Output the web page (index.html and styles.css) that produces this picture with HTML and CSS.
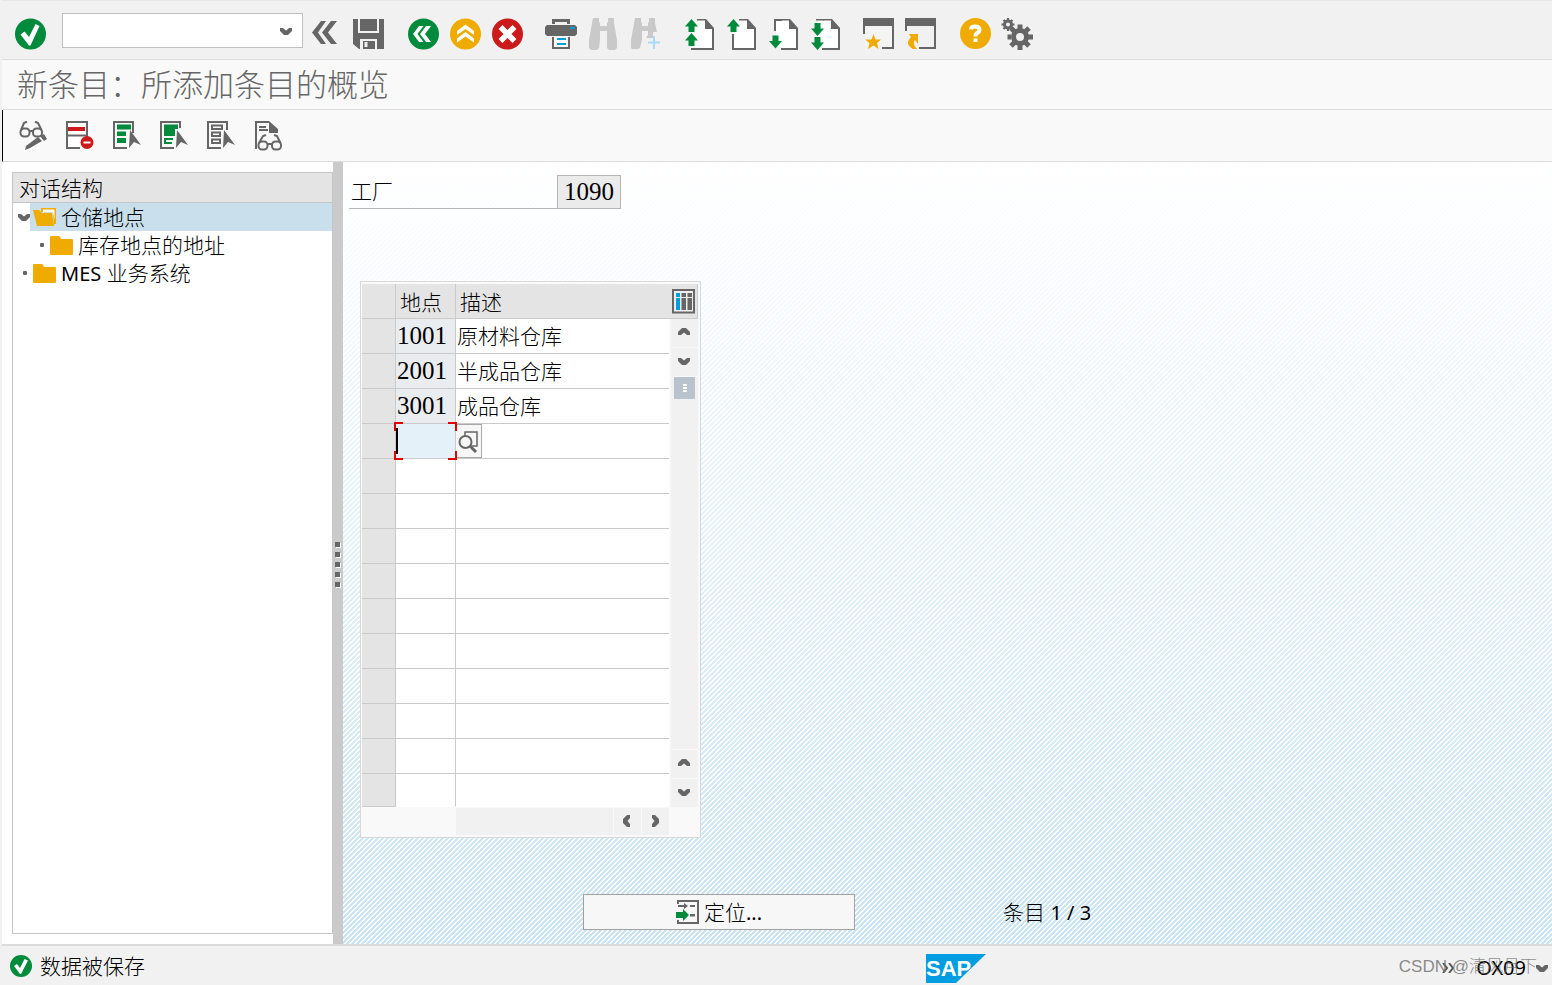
FILE: index.html
```html
<!DOCTYPE html>
<html lang="zh-CN">
<head>
<meta charset="utf-8">
<title>新条目：所添加条目的概览</title>
<link rel="stylesheet" href="styles.css">
</head>
<body>
<svg class="defs" aria-hidden="true">
  <defs>
    <symbol id="up" viewBox="0 0 12 8"><path d="M0 7 H3 L6 4.500 L9 7 H12 V4 L8 0 H4 L0 4Z" fill="#666"/></symbol>
    <symbol id="down" viewBox="0 0 12 8"><path d="M0 1 H3 L6 3.500 L9 1 H12 V4 L8 8 H4 L0 4Z" fill="#666"/></symbol>
    <symbol id="left" viewBox="0 0 8 12"><path d="M7 0 V3 L4.500 6 L7 9 V12 H4 L0 8 V4 L4 0Z" fill="#666"/></symbol>
    <symbol id="right" viewBox="0 0 8 12"><path d="M1 0 V3 L3.500 6 L1 9 V12 H4 L8 8 V4 L4 0Z" fill="#666"/></symbol>
    <symbol id="folder" viewBox="0 0 24 21"><path d="M0 2 Q0 1 1 1 H9 Q10 1 11 4 H22 Q23 4 23 5 V19 Q23 20 22 20 H1 Q0 20 0 19Z" fill="#f0ab00"/></symbol>
    <symbol id="page" viewBox="0 0 32 32"><path d="M7 2 H20 L28 10 V30 H7Z" fill="#fff"/><path d="M12 1 H21 L29 10 V32 H6 V30 H27 V11 H20 V2.500 H12Z" fill="#666"/></symbol>
    <symbol id="arrow" viewBox="0 0 13 13"><path d="M6.500 0 L13 7.500 H9.500 V13 H3.500 V7.500 H0Z" fill="#008a3b"/></symbol>
  </defs>
</svg>

<header class="system-bar">
  <button class="tool" aria-label="回车"><svg viewBox="0 0 32 32"><circle cx="15.500" cy="16" r="15.500" fill="#008a3b"/><path d="M5.500 16.500 L9.500 13.500 L14 19 L20.500 6 L24.500 8 L15.500 27.500 H14Z" fill="#fff"/></svg></button>
  <div class="command">
    <input class="command-input" type="text" aria-label="命令">
    <svg class="command-arrow" viewBox="0 0 12 8"><use href="#down"/></svg>
  </div>
  <button class="tool collapse" aria-label="收起"><svg viewBox="0 0 32 32"><path d="M1 14.500 L10 3 H15 L7 14.500 L15 26 H10Z M11 14.500 L20 3 H26 L17 14.500 L26 26 H20Z" fill="#666"/></svg></button>
  <div class="tool-group">
    <button class="tool" aria-label="保存"><svg viewBox="0 0 32 32"><path d="M0 1 H5 V15 H26 V1 H31 V31 H6 L0 26Z" fill="#666"/><rect x="7" y="1" width="17" height="12" fill="#666"/><path d="M7 21 H24 V31 H7Z" fill="#f1f1f1"/><path d="M10 23 H22 V31 H10Z" fill="#666"/><path d="M11.500 24 H14.500 V29 H11.500Z" fill="#f1f1f1"/></svg></button>
  </div>
  <div class="tool-group">
    <button class="tool" aria-label="返回"><svg viewBox="0 0 32 32"><circle cx="16.500" cy="16" r="15.500" fill="#008a3b"/><path d="M6 16 L12 8 H16.500 L10.500 16 L16.500 24 H12Z M13 16 L19 8 H24 L18 16 L24 24 H19Z" fill="#fff"/></svg></button>
    <button class="tool" aria-label="退出"><svg viewBox="0 0 32 32"><circle cx="16.500" cy="16" r="15.500" fill="#f0ab00"/><path d="M16.500 6.500 L25 13 V17 L16.500 11 L8 17 V13Z M16.500 14 L25 20.500 V24.500 L16.500 18.500 L8 24.500 V20.500Z" fill="#fff"/></svg></button>
    <button class="tool" aria-label="取消"><svg viewBox="0 0 32 32"><circle cx="16.500" cy="16" r="15.500" fill="#cc1919"/><path d="M9.500 9 L23.500 23 M23.500 9 L9.500 23" stroke="#fff" stroke-width="5.500"/></svg></button>
  </div>
  <div class="tool-group">
    <button class="tool" aria-label="打印"><svg viewBox="0 0 32 32"><path d="M7 1 H25 V6 H22 V4 H10 V6 H7Z" fill="#666"/><path d="M2 7 H30 L32 9 V16 L30 18 H2 L0 16 V9Z" fill="#666"/><path d="M25 9 H30 V11 H25Z" fill="#009de0"/><path d="M8 19 V30 H24 V19" fill="#fff" stroke="#666" stroke-width="2"/><path d="M12 20 H21 V22 H12Z M12 25 H21 V27 H12Z" fill="#009de0"/></svg></button>
    <button class="tool" aria-label="查找" disabled><svg viewBox="0 0 32 32"><path d="M6 0 H12 V4 L13 5 V8 H20 V5 L21 4 V0 H27 V5 L30 22 V30 L28 32 H22 L20 30 V13 H13 V22 L12 30 L10 32 H4 L2 30 V22Z" fill="#c9c9c9"/></svg></button>
    <button class="tool" aria-label="查找下一个" disabled><svg viewBox="0 0 32 32"><path d="M6 0 H12 V4 L13 5 V8 H19 V5 L20 4 V0 H26 V5 L28 14 H24 V20 H17 L19 17 V13 H13 V22 L11 30 L9 31 H3 L2 30 V22Z" fill="#c9c9c9"/><path d="M25 18 V31 M19 24.500 H31" stroke="#a9dcf4" stroke-width="2"/></svg></button>
  </div>
  <div class="tool-group">
    <button class="tool" aria-label="第一页"><svg viewBox="0 0 32 32"><use href="#page" x="2" width="32" height="32"/><path d="M2 1 H13 V29 H2Z" fill="#f1f1f1"/><path d="M9 3 H14 V29 H9Z" fill="#fff"/><use href="#arrow" x="2" y="1" width="13" height="13"/><use href="#arrow" x="2" y="15" width="13" height="13"/></svg></button>
    <button class="tool" aria-label="上一页"><svg viewBox="0 0 32 32"><use href="#page" x="2" width="32" height="32"/><path d="M7 16 H9 V32 H7Z" fill="#666"/><path d="M8 0 H14 V3 H8Z" fill="#f1f1f1"/><use href="#arrow" x="2" y="1" width="13" height="13"/></svg></button>
    <button class="tool" aria-label="下一页"><svg viewBox="0 0 32 32"><use href="#page" x="2" width="32" height="32"/><path d="M7 1 H15 V3 H9 V13 H7Z" fill="#666"/><path d="M7 29 H14 V32 H7Z" fill="#f1f1f1"/><use href="#arrow" x="2" y="-32" width="13" height="16" transform="scale(1 -1)"/></svg></button>
    <button class="tool" aria-label="最后一页"><svg viewBox="0 0 32 32"><use href="#page" x="2" width="32" height="32"/><path d="M7 1 H15 V2.500 H7Z" fill="#666"/><path d="M7 29 H13 V32 H7Z" fill="#f1f1f1"/><use href="#arrow" x="2" y="-18" width="13" height="13" transform="scale(1 -1)"/><use href="#arrow" x="2" y="-32" width="13" height="13" transform="scale(1 -1)"/></svg></button>
  </div>
  <div class="tool-group">
    <button class="tool" aria-label="新建会话"><svg viewBox="0 0 32 32"><path d="M2 8 H29 V29 H2Z" fill="#f4f4f4"/><path d="M0 0 H31 V31 H19 V29 H29 V8 H2 V16 H0Z" fill="#666"/><path d="M10.500 16 L12.500 21.500 H18 L14 25 L15.500 31 L10.500 27.500 L5 31 L6.500 25 L2 21.500 H8.500Z" fill="#f0ab00"/></svg></button>
    <button class="tool" aria-label="生成快捷方式"><svg viewBox="0 0 32 32"><path d="M0 0 H31 V31 H14 V29 H29 V8 H2 V13 H0Z" fill="#666"/><path d="M4 16 H13 V26 L10 22 Q7 26 12 31 H8 Q-1 26 6 19Z" fill="#f0ab00"/></svg></button>
  </div>
  <div class="tool-group">
    <button class="tool" aria-label="帮助"><svg viewBox="0 0 32 32"><circle cx="16.500" cy="15.500" r="15.500" fill="#f0ab00"/><path d="M12 11.500 Q12 8.500 16 8.500 Q20.500 8.500 20.500 12 Q20.500 14 17.500 15.500 Q16.500 16.500 16.500 18.500" fill="none" stroke="#fff" stroke-width="4"/><path d="M14.500 20.500 H18.500 V24 H14.500Z" fill="#fff"/></svg></button>
    <button class="tool" aria-label="定制本地布局"><svg viewBox="0 0 32 32"><g fill="none" stroke="#666"><circle cx="19" cy="19" r="6.500" stroke-width="5"/><path d="M19 6.500 V11 M19 27 V32 M6.500 19 H10 M27 19 H32 M10 10 L14 14 M24 24 L28 28 M28 10 L24 14 M14 24 L10 28" stroke-width="5"/><circle cx="7" cy="6.500" r="3.500" stroke-width="3"/><path d="M7 0 V3 M7 10 V13 M.5 6.500 H3 M11 6.500 H13.500 M2.500 2 L4.500 4 M9.500 9 L11.500 11 M11.500 2 L9.500 4 M4.500 9 L2.500 11" stroke-width="2.200"/></g></svg></button>
  </div>
</header>

<h1 class="title">新条目：所添加条目的概览</h1>

<nav class="app-bar">
  <button class="app-tool" aria-label="显示/更改"><svg viewBox="0 0 28 30"><g fill="none" stroke="#666" stroke-width="2"><rect x="1.500" y="7.500" width="9" height="8" rx="3.500"/><rect x="14" y="7.500" width="9" height="8" rx="3.500"/><path d="M10 10 H14 M2 9 L5 2 L8 .5 M22.500 9 L19 2 L16 .5"/></g><path d="M7 25 L19 16 L23 20 L11 27 L6 29Z M21 15 L25 13 L28 18 L25 20Z" fill="#666"/></svg></button>
  <button class="app-tool" aria-label="删除"><svg viewBox="0 0 28 30"><path d="M1 1 H20 V17 H14 V27 H1Z" fill="#fff"/><path d="M21 17 V1 H1 V27 H14 M1 14.500 H20" fill="none" stroke="#666" stroke-width="2"/><path d="M2 6 H19 V10 H2Z" fill="#cc1919"/><circle cx="21" cy="21.500" r="6.500" fill="#cc1919"/><path d="M17.500 20.500 H24.500 V22.500 H17.500Z" fill="#fff"/></svg></button>
  <button class="app-tool" aria-label="全选"><svg viewBox="0 0 28 30"><path d="M20 12 V1 H1 V27 H14" fill="none" stroke="#666" stroke-width="2"/><path d="M4 3.500 H18 V8.500 H4Z M4 10.500 H13 V15 H4Z M4 17 H13 V22 H4Z" fill="#008a3b"/><path d="M17 9 L28 24 L21 21 L16 27Z" fill="#666"/></svg></button>
  <button class="app-tool" aria-label="选择块"><svg viewBox="0 0 28 30"><path d="M20 7 V1 H1 V27 H14" fill="none" stroke="#666" stroke-width="2"/><path d="M4 3.500 H18 V8 H15 V15 H4Z" fill="#008a3b"/><path d="M13 18 H5 V22 H12" fill="none" stroke="#008a3b" stroke-width="2"/><path d="M17 9 L28 24 L21 21 L16 27Z" fill="#666"/></svg></button>
  <button class="app-tool" aria-label="取消全选"><svg viewBox="0 0 28 30"><path d="M20 9 V1 H1 V27 H14 M5 4.500 H15 V8 H5Z M5 11.500 H13 V15 H5Z M5 18.500 H13 V22 H5Z" fill="none" stroke="#666" stroke-width="2"/><path d="M17 9 L28 24 L21 21 L16 27Z" fill="#666"/></svg></button>
  <button class="app-tool" aria-label="打印视图"><svg viewBox="0 0 28 30"><path d="M2 28 V1 H15 M5 6 H12 M5 9 H14" fill="none" stroke="#666" stroke-width="2"/><path d="M15 0 L24 8 V12 H15Z" fill="#666"/><g fill="none" stroke="#666" stroke-width="2"><rect x="4.500" y="20.500" width="9" height="8" rx="3.500"/><rect x="18" y="20.500" width="9" height="8" rx="3.500"/><path d="M13 23 H18 M5 22 L9 15 L12 14 M26.500 22 L23 15 L20 14"/></g></svg></button>
</nav>

<main class="work">
  <aside class="side">
    <div class="tree">
      <h2 class="tree-head">对话结构</h2>
      <ul class="tree-list">
        <li class="node"><svg class="toggle" viewBox="0 0 12 8"><use href="#down"/></svg><a class="node-link selected" href="#storage"><svg class="folder" viewBox="0 0 24 21"><path d="M8 1 H23 V17 H21 L20 5 H8Z" fill="#f0ab00"/><path d="M10 2.500 H21.500 V13 L20 5 H10Z" fill="#fff"/><path d="M0 3 H6 L9 6 H19 L21 19 H4Z" fill="#f0ab00"/></svg>仓储地点</a></li>
        <li class="node child"><i class="dot"></i><a class="node-link" href="#address"><svg class="folder"><use href="#folder"/></svg>库存地点的地址</a></li>
        <li class="node"><i class="dot"></i><a class="node-link" href="#mes"><svg class="folder"><use href="#folder"/></svg><span><span class="latin">MES</span> 业务系统</span></a></li>
      </ul>
    </div>
  </aside>
  <div class="splitter"><i></i><i></i><i></i><i></i><i></i></div>
  <section class="content">
    <div class="field">
      <label class="field-label" for="plant">工厂</label>
      <input class="field-input" id="plant" type="text" value="1090" readonly>
    </div>
    <div class="grid-frame">
      <table class="grid">
        <thead><tr><th class="sel"></th><th class="code">地点</th><th class="desc">描述</th></tr></thead>
        <tbody>
          <tr class="filled"><td></td><td><input aria-label="地点 1" value="1001" readonly></td><td><input aria-label="描述 1" value="原材料仓库"></td></tr>
          <tr class="filled"><td></td><td><input aria-label="地点 2" value="2001" readonly></td><td><input aria-label="描述 2" value="半成品仓库"></td></tr>
          <tr class="filled"><td></td><td><input aria-label="地点 3" value="3001" readonly></td><td><input aria-label="描述 3" value="成品仓库"></td></tr>
          <tr class="active"><td></td><td><input aria-label="地点 4"><span class="focus"></span></td><td><button class="lookup" aria-label="搜索帮助"><svg viewBox="0 0 22 22"><path d="M7 5 V1 H19 V15 H14" fill="none" stroke="#666" stroke-width="1.500"/><circle cx="7.500" cy="11" r="6" fill="#f7f7f7" stroke="#666" stroke-width="2"/><path d="M12 15 L18 21" stroke="#666" stroke-width="3"/></svg></button></td></tr>
          <tr><td></td><td></td><td></td></tr>
          <tr><td></td><td></td><td></td></tr>
          <tr><td></td><td></td><td></td></tr>
          <tr><td></td><td></td><td></td></tr>
          <tr><td></td><td></td><td></td></tr>
          <tr><td></td><td></td><td></td></tr>
          <tr><td></td><td></td><td></td></tr>
          <tr><td></td><td></td><td></td></tr>
          <tr><td></td><td></td><td></td></tr>
          <tr class="last"><td></td><td></td><td></td></tr>
        </tbody>
      </table>
      <div class="grid-side">
        <button class="config" aria-label="配置"><svg viewBox="0 0 24 25"><path d="M1 1 H22 V23.500 H1Z" fill="#eee" stroke="#666" stroke-width="2"/><path d="M4 4 H8 V8 H4Z M4 9 H8 V21 H4Z" fill="#009de0"/><path d="M9.500 4 H14 V8 H9.500Z M9.500 9 H14 V21 H9.500Z M15.500 4 H20 V8 H15.500Z M15.500 9 H20 V21 H15.500Z" fill="#666"/></svg></button>
        <div class="vscroll">
          <button class="step" aria-label="向上"><svg class="chev"><use href="#up"/></svg></button>
          <button class="step" aria-label="向下"><svg class="chev"><use href="#down"/></svg></button>
          <div class="track"><span class="thumb"><i></i><i></i><i></i></span></div>
          <button class="step" aria-label="向上"><svg class="chev"><use href="#up"/></svg></button>
          <button class="step" aria-label="向下"><svg class="chev"><use href="#down"/></svg></button>
        </div>
      </div>
      <div class="hscroll">
        <div class="htrack"></div>
        <button class="hstep" aria-label="向左"><svg class="hchev"><use href="#left"/></svg></button>
        <button class="hstep" aria-label="向右"><svg class="hchev"><use href="#right"/></svg></button>
      </div>
    </div>
    <div class="foot">
      <button class="position"><svg class="position-icon" viewBox="0 0 24 24"><path d="M2 4 V1 H22 V23 H2 V20" fill="none" stroke="#666" stroke-width="2"/><path d="M2 5 H8 V3 L12 6 L8 9 V7 H2Z M14 5 H19 V7 H14Z M14 14 H19 V16.500 H14Z" fill="#666"/><path d="M0 12 H7 V9 L13 15 L7 21 V18 H0Z" fill="#008a3b"/></svg><span>定位<span class="latin">...</span></span></button>
      <span class="entry">条目 <span class="latin">1 / 3</span></span>
    </div>
  </section>
</main>

<footer class="status">
  <svg class="ok" viewBox="0 0 22 22"><circle cx="11" cy="11" r="11" fill="#008a3b"/><path d="M4 11 L7 9 L10 13 L14.500 4 L18 5.500 L11 19 H10Z" fill="#fff"/></svg>
  <span class="message">数据被保存</span>
  <svg class="logo" viewBox="0 0 60 30" role="img" aria-label="SAP"><path d="M0 0 H60 L30 29 H0Z" fill="#009de0"/><text x="0" y="22" class="logo-text">SAP</text></svg>
  <div class="session">
    <svg class="more" viewBox="0 0 12 10"><path d="M1 0 L5 5 L1 10 M7 0 L11 5 L7 10" fill="none" stroke="#555" stroke-width="2"/></svg>
    <span class="tcode">OX09</span>
    <svg class="chev"><use href="#down"/></svg>
    <span class="watermark">CSDN @清风月下</span>
  </div>
</footer>
</body>
</html>
```
FILE: styles.css
```css
* { box-sizing: border-box; }

body {
  margin: 0;
  min-height: 100vh;
  padding-left: 2px;
  display: flex;
  flex-direction: column;
  background: #f1f1f1;
  color: #000;
  font: 300 21px/28px "Noto Sans", "Noto Sans CJK SC", sans-serif;
}

button, input {
  margin: 0;
  padding: 0;
  border: 0;
  border-radius: 0;
  background: none;
  color: inherit;
  font: inherit;
}

button { display: flex; align-items: center; justify-content: center; }
svg { display: block; flex: none; }
.defs { position: absolute; width: 0; height: 0; }
.latin { font-size: 20px; font-weight: 400; }

.system-bar {
  display: flex;
  height: 60px;
  padding: 13px 13px 0;
  border-top: 1px solid #e8e8e8;
  border-bottom: 1px solid #dcdcdc;
}
.system-bar > .tool, .tool-group { margin-top: 4px; }
.tool, .tool svg { width: 32px; height: 32px; }
.tool-group { display: flex; gap: 10px; margin-right: 22px; }
.collapse { margin-right: 10px; }

.command { position: relative; width: 241px; margin: -1px 8px 0 15px; }
.command-input { width: 100%; height: 35px; padding: 0 28px 0 6px; border: 1px solid #bfbfbf; background: #fff; }
.command-arrow { position: absolute; right: 11px; top: 14px; width: 12px; height: 8px; }

.title {
  margin: 0;
  padding: 0 15px;
  height: 50px;
  border-bottom: 1px solid #dcdcdc;
  background: #f9f9f9;
  color: #666;
  font-size: 31px;
  font-weight: 300;
  line-height: 49px;
}

.app-bar {
  display: flex;
  align-items: center;
  gap: 19px;
  height: 52px;
  padding-left: 16px;
  border-left: 1px solid #000;
  border-bottom: 1px solid #dcdcdc;
  background: #f9f9f9;
}
.app-tool, .app-tool svg { width: 28px; height: 30px; }

.work { flex: 1; display: flex; background: #fff; }
.side { display: flex; width: 331px; padding: 10px 0 10px 10px; }
.tree { flex: 1; border: 1px solid #c6c6c6; }
.tree-head { margin: 0; padding-left: 6px; height: 30px; border-bottom: 1px solid #c6c6c6; background: #e4e4e4; font-size: 21px; font-weight: 300; line-height: 30px; }
.tree-list { margin: 0; padding: 0; list-style: none; }
.node { display: flex; align-items: center; height: 28px; padding-left: 5px; }
.child { padding-left: 22px; }
.toggle { width: 12px; height: 8px; }
.dot { width: 4px; height: 4px; margin: 0 3px 0 5px; background: #666; border-radius: 1px; }
.node-link { flex: 1; display: flex; align-items: center; gap: 4px; height: 28px; padding-left: 3px; color: #000; text-decoration: none; }
.selected { background: #c9e0ec; }
.folder { width: 24px; height: 21px; }

.splitter { display: flex; flex-direction: column; align-items: center; justify-content: center; gap: 5px; width: 10px; padding: 22px 2px 0 0; background: #cacaca; }
.splitter i { width: 5px; height: 5px; background: #666; box-shadow: 1px 1px #fff; }

.content {
  flex: 1;
  display: flex;
  flex-direction: column;
  align-items: flex-start;
  padding: 13px 6px 14px;
  background:
    linear-gradient(#fff, rgba(255, 255, 255, 0)),
    linear-gradient(135deg, #c9e4f3 25%, #fff 25%, #fff 50%, #c9e4f3 50%, #c9e4f3 75%, #fff 75%) 0 0 / 5px 5px;
}

.field { display: flex; margin-bottom: 72px; }
.field-label { width: 208px; height: 34px; padding-left: 2px; border-bottom: 1px solid #b5b5b5; line-height: 33px; }
.field-input { width: 64px; height: 34px; padding-left: 6px; border: 1px solid #b5b5b5; background: #ebebeb; font-family: "Liberation Serif", serif; font-size: 25px; }

.grid-frame { display: grid; grid-template-columns: 307px 29px; margin-left: 11px; padding: 2px 2px 1px 1px; border: 1px solid #d8d8d8; background: #f9f9f9; }
.grid { width: 307px; border-collapse: separate; border-spacing: 0; table-layout: fixed; }
.grid th, .grid td { height: 35px; padding: 0; border-bottom: 1px solid #cacaca; border-right: 1px solid #cacaca; }
.grid th { background: #e4e4e4; font-weight: 300; text-align: left; padding: 2px 0 0 4px; line-height: 32px; }
.grid td { position: relative; background: #fff; }
.grid .last td { height: 33px; border-bottom-color: #fff; }
.grid tr td:first-child { background: #e4e4e4; }
.grid .last td:first-child { border-bottom-color: #cacaca; }
.grid tr > :last-child { border-right: 0; }
.sel { width: 34px; }
.code { width: 60px; }
.grid input { display: block; width: 100%; height: 34px; padding: 0 0 2px 1px; outline: 0; }
.grid td:nth-child(2) input { padding-bottom: 0; font-family: "Liberation Serif", serif; font-size: 25px; }
.filled td:nth-child(2) { background: #e9edf0; }
.grid .active td:nth-child(2) { background: #e4f1f9; }
.active td:nth-child(2) input { height: 26px; border-left: 2px solid #000; }

.focus {
  position: absolute;
  inset: -2px -2px;
  background:
    linear-gradient(#e00000, #e00000) 0 0 / 9px 2px,
    linear-gradient(#e00000, #e00000) 0 0 / 2px 9px,
    linear-gradient(#e00000, #e00000) 100% 0 / 9px 2px,
    linear-gradient(#e00000, #e00000) 100% 0 / 2px 9px,
    linear-gradient(#e00000, #e00000) 0 100% / 9px 2px,
    linear-gradient(#e00000, #e00000) 0 100% / 2px 9px,
    linear-gradient(#e00000, #e00000) 100% 100% / 9px 2px,
    linear-gradient(#e00000, #e00000) 100% 100% / 2px 9px;
  background-repeat: no-repeat;
  z-index: 1;
}
.lookup { width: 26px; height: 34px; padding-top: 2px; border: 1px solid #a8a8a8; border-left: 0; background: #f7f7f7; }
.lookup svg { width: 22px; height: 22px; }

.grid-side { display: flex; flex-direction: column; }
.config { height: 35px; padding-left: 2px; background: #e4e4e4; border-bottom: 1px solid #cacaca; border-right: 1px solid #cacaca; }
.config svg { width: 24px; height: 25px; }
.vscroll { flex: 1; display: flex; flex-direction: column; gap: 1px; margin-left: 2px; }
.step { height: 28px; padding: 0 2px 2px 0; background: #f1f1f1; }
.track { flex: 1; padding: 0 3px; background: #f1f1f1; }
.thumb { display: flex; flex-direction: column; align-items: center; justify-content: center; gap: 1px; height: 22px; background: #b8c3cd; }
.thumb i { width: 4px; height: 2px; background: #fff; }
.chev { width: 12px; height: 8px; }
.hchev { width: 8px; height: 12px; }
.hscroll { display: flex; gap: 1px; height: 27px; margin: 1px 0 1px 94px; }
.htrack { flex: 1; background: #f1f1f1; }
.hstep { width: 27px; padding: 0 2px 2px 0; background: #f1f1f1; }

.foot { display: flex; align-items: center; gap: 148px; margin-top: auto; padding-left: 234px; }
.position { width: 272px; height: 36px; gap: 4px; border: 1px solid #a0a0a0; background: #f7f7f7; }
.position-icon { width: 24px; height: 24px; }
.entry { white-space: pre; }

.status { display: flex; align-items: center; height: 41px; padding: 1px 4px 0 8px; border-top: 2px solid #dcdcdc; background: #f1f1f1; }
.ok { width: 22px; height: 22px; }
.message { width: 895px; padding-left: 8px; line-height: 38px; }
.logo { width: 60px; height: 30px; margin-top: 6px; margin-left: -1px; }
.logo-text { fill: #fff; font: bold 22px "Liberation Sans", sans-serif; }
.session { position: relative; display: flex; align-items: center; margin-left: auto; margin-top: 4px; }
.more { width: 12px; height: 10px; margin-right: 22px; }
.tcode { margin-right: 10px; font-size: 20px; font-weight: 400; }
.watermark { position: absolute; right: 11px; bottom: 1px; color: rgba(110, 110, 110, .8); font: 300 17px/28px "Liberation Sans", "Noto Sans CJK SC", sans-serif; white-space: nowrap; }
```
